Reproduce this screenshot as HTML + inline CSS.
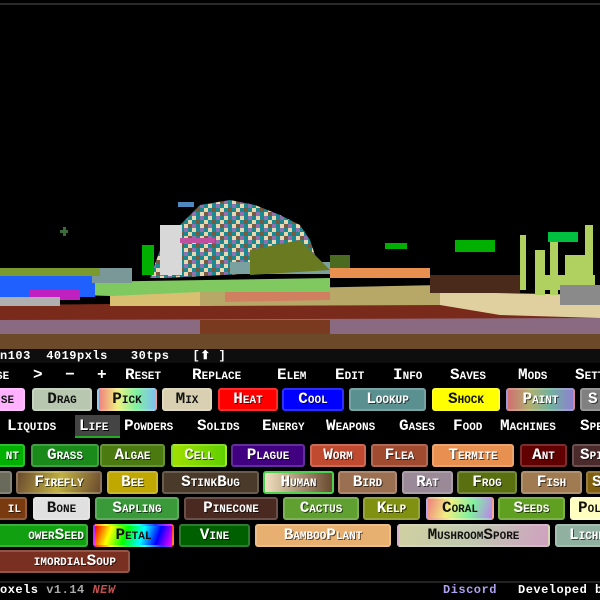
<!DOCTYPE html>
<html><head><meta charset="utf-8"><style>
*{margin:0;padding:0;box-sizing:border-box}
body{width:600px;height:600px;background:#000;overflow:hidden;position:relative;font-family:"Liberation Mono",monospace;font-weight:bold;color:#fff}
.a{position:absolute;white-space:nowrap}
.t{font-size:16px;font-variant:small-caps;text-shadow:1px 1px 0 #000;height:15px;line-height:15px}
.b{position:absolute;height:23px;border-radius:3px;border:2px solid rgba(255,255,255,.18);font-size:16px;font-variant:small-caps;line-height:19px;text-align:center;overflow:hidden;text-shadow:1px 1px 0 rgba(0,0,0,.6);white-space:nowrap}
.d{color:#111;text-shadow:none}
</style></head><body>
<div class="a" style="left:0;top:3px;width:600px;height:2px;background:#2a2a2a"></div>
<svg class="a" style="left:0;top:0" width="600" height="350">
<defs>
<pattern id="m" width="16" height="12" patternUnits="userSpaceOnUse">
<rect width="16" height="12" fill="#1a8a90"/>
<rect x="0" y="0" width="4" height="4" fill="#e8d8b0"/><rect x="8" y="0" width="4" height="4" fill="#9070b0"/>
<rect x="4" y="4" width="4" height="4" fill="#7a5a40"/><rect x="12" y="4" width="4" height="4" fill="#e8d8b0"/>
<rect x="0" y="8" width="4" height="4" fill="#9070b0"/><rect x="8" y="8" width="4" height="4" fill="#e8d8b0"/><rect x="12" y="8" width="4" height="4" fill="#7a5a40"/>
</pattern>
</defs>
<rect x="0" y="333" width="600" height="17" fill="#6b4a2a"/>
<rect x="0" y="318" width="600" height="16" fill="#8a6a80"/>
<rect x="200" y="320" width="130" height="14" fill="#7a3a20"/>
<polygon points="0,305 600,300 600,318 0,320" fill="#7a2a1a"/>
<polygon points="110,293 200,290 210,306 110,306" fill="#d8c070"/>
<polygon points="200,290 440,285 440,305 200,306" fill="#b8a868"/>
<polygon points="225,292 330,292 330,300 225,302" fill="#d08060"/>
<polygon points="440,292 600,295 600,318 500,315 440,305" fill="#e0d0a0"/>
<polygon points="80,282 330,278 330,292 200,292 110,296 80,295" fill="#80c860"/>
<rect x="0" y="275" width="95" height="22" fill="#2060ff"/>
<rect x="30" y="290" width="50" height="10" fill="#c020c0"/>
<rect x="0" y="297" width="60" height="9" fill="#b0b0b0"/>
<rect x="92" y="268" width="40" height="15" fill="#7a9898"/>
<rect x="0" y="268" width="100" height="8" fill="#7a9a30"/>
<polygon points="150,278 160,250 180,225 200,205 230,200 255,205 280,215 300,225 310,240 320,270 165,278" fill="url(#m)"/>
<rect x="230" y="262" width="110" height="12" fill="#7aa0a0"/>
<polygon points="250,250 300,240 330,270 250,275" fill="#6a7a20"/>
<rect x="142" y="245" width="12" height="30" fill="#00b000"/>
<rect x="160" y="225" width="22" height="50" fill="#d8d8d8"/>
<rect x="178" y="202" width="16" height="5" fill="#5088c0"/>
<rect x="180" y="238" width="35" height="5" fill="#c050a0"/>
<rect x="60" y="230" width="8" height="3" fill="#3a6a3a"/><rect x="63" y="227" width="3" height="9" fill="#3a6a3a"/>
<rect x="385" y="243" width="22" height="6" fill="#00b000"/><rect x="455" y="240" width="40" height="12" fill="#00b000"/>
<rect x="330" y="255" width="20" height="20" fill="#4a6a20"/>
<rect x="330" y="268" width="100" height="10" fill="#e89050"/>
<rect x="430" y="275" width="90" height="18" fill="#4a2a1a"/>
<g fill="#b0d060">
<rect x="520" y="235" width="6" height="55"/><rect x="535" y="250" width="10" height="45"/><rect x="550" y="240" width="8" height="55"/><rect x="565" y="255" width="25" height="35"/><rect x="585" y="225" width="8" height="65"/><rect x="540" y="275" width="55" height="15"/>
</g>
<rect x="548" y="232" width="30" height="10" fill="#00c040"/>
<rect x="560" y="285" width="40" height="20" fill="#8a8a8a"/>
</svg>
<div class="a" style="left:0;top:349px;width:600px;height:14px;background:#0e0e0e"></div>
<div class="a" style="left:0;top:350px;font-size:12px;line-height:13px;letter-spacing:.5px">n103 &nbsp;4019pxls &nbsp;&nbsp;30tps &nbsp;&nbsp;[⬆ ]</div>
<div class="a t" style="left:-4px;top:368px">se</div><div class="a t" style="left:33px;top:368px">&gt;</div><div class="a t" style="left:65px;top:368px">−</div><div class="a t" style="left:97px;top:368px">+</div>
<div class="a t" style="left:125px;top:368px">Reset</div><div class="a t" style="left:192px;top:368px">Replace</div><div class="a t" style="left:277px;top:368px">Elem</div><div class="a t" style="left:335px;top:368px">Edit</div><div class="a t" style="left:393px;top:368px">Info</div><div class="a t" style="left:450px;top:368px">Saves</div><div class="a t" style="left:518px;top:368px">Mods</div><div class="a t" style="left:575px;top:368px">Settings</div>

<div class="b d" style="left:-10px;top:388px;width:35px;background:#ffb0ff">se</div>
<div class="b d" style="left:32px;top:388px;width:60px;background:#b8c8b0">Drag</div>
<div class="b d" style="left:97px;top:388px;width:60px;background:linear-gradient(90deg,#f08080,#f0f080,#80f0a0,#80c0f0)">Pick</div>
<div class="b d" style="left:162px;top:388px;width:50px;background:#d8d0b0">Mix</div>
<div class="b" style="left:218px;top:388px;width:60px;background:#ff0000">Heat</div>
<div class="b" style="left:282px;top:388px;width:62px;background:#0000ff">Cool</div>
<div class="b" style="left:349px;top:388px;width:77px;background:#5a9090">Lookup</div>
<div class="b d" style="left:432px;top:388px;width:68px;background:#ffff00">Shock</div>
<div class="b" style="left:506px;top:388px;width:69px;background:linear-gradient(90deg,#d07070,#b0b070,#70b0a0,#9080d0)">Paint</div>
<div class="b" style="left:580px;top:388px;width:40px;background:#808080;text-align:left;padding-left:6px">S</div>

<div class="a" style="left:75px;top:415px;width:45px;height:23px;background:#444;border-bottom:2px solid #2a2"></div>
<div class="a t" style="left:7px;top:419px">Liquids</div><div class="a t" style="left:79px;top:419px">Life</div><div class="a t" style="left:124px;top:419px">Powders</div><div class="a t" style="left:197px;top:419px">Solids</div><div class="a t" style="left:262px;top:419px">Energy</div><div class="a t" style="left:326px;top:419px">Weapons</div><div class="a t" style="left:399px;top:419px">Gases</div><div class="a t" style="left:453px;top:419px">Food</div><div class="a t" style="left:500px;top:419px">Machines</div><div class="a t" style="left:580px;top:419px">Special</div>

<div class="b" style="left:-20px;top:444px;width:45px;background:#00b000;text-align:right;padding-right:4px">nt</div>
<div class="b" style="left:31px;top:444px;width:68px;background:#1a8a1a">Grass</div>
<div class="b" style="left:100px;top:444px;width:65px;background:#4a7a10">Algae</div>
<div class="b" style="left:171px;top:444px;width:56px;background:linear-gradient(90deg,#a0e000,#60d000)">Cell</div>
<div class="b" style="left:231px;top:444px;width:74px;background:#400080">Plague</div>
<div class="b" style="left:310px;top:444px;width:56px;background:#c04a30">Worm</div>
<div class="b" style="left:371px;top:444px;width:57px;background:#a04a30">Flea</div>
<div class="b" style="left:432px;top:444px;width:82px;background:#e89050">Termite</div>
<div class="b" style="left:520px;top:444px;width:47px;background:#600000">Ant</div>
<div class="b" style="left:572px;top:444px;width:60px;background:#4a2a2a;text-align:left;padding-left:6px">Spider</div>

<div class="b" style="left:-20px;top:471px;width:32px;background:#6a6a5a"></div>
<div class="b" style="left:16px;top:471px;width:86px;background:linear-gradient(110deg,#6a4a30,#c0b040 50%,#6a4a30)">Firefly</div>
<div class="b" style="left:107px;top:471px;width:51px;background:#c0a800">Bee</div>
<div class="b" style="left:162px;top:471px;width:97px;background:#4a3a2a">StinkBug</div>
<div class="b" style="left:263px;top:471px;width:71px;background:linear-gradient(90deg,#f0e0c0,#6a4a30);border-color:#50d050">Human</div>
<div class="b" style="left:338px;top:471px;width:59px;background:#9a7050">Bird</div>
<div class="b" style="left:402px;top:471px;width:51px;background:#9a8a98">Rat</div>
<div class="b" style="left:457px;top:471px;width:60px;background:#5a7010">Frog</div>
<div class="b" style="left:521px;top:471px;width:61px;background:#a07a50">Fish</div>
<div class="b" style="left:586px;top:471px;width:40px;background:#806010;text-align:left;padding-left:4px">S</div>

<div class="b" style="left:-20px;top:497px;width:47px;background:#7a3a10;text-align:right;padding-right:4px">il</div>
<div class="b d" style="left:33px;top:497px;width:57px;background:#e0e0e0">Bone</div>
<div class="b" style="left:95px;top:497px;width:84px;background:#3a9a3a">Sapling</div>
<div class="b" style="left:184px;top:497px;width:94px;background:#4a2a20">Pinecone</div>
<div class="b" style="left:283px;top:497px;width:76px;background:#60a030">Cactus</div>
<div class="b" style="left:363px;top:497px;width:57px;background:#809010">Kelp</div>
<div class="b d" style="left:426px;top:497px;width:68px;background:linear-gradient(110deg,#f08080,#f0f080,#80f0a0,#c080f0)">Coral</div>
<div class="b" style="left:498px;top:497px;width:67px;background:#60a020">Seeds</div>
<div class="b d" style="left:570px;top:497px;width:60px;background:#ffffc0;text-align:left;padding-left:6px">Pollen</div>

<div class="b" style="left:-20px;top:524px;width:108px;background:#10a010;text-align:right;padding-right:2px">owerSeed</div>
<div class="b d" style="left:93px;top:524px;width:81px;background:linear-gradient(110deg,#ff0000,#ffff00,#00ff00,#00ffff,#0000ff,#ff00ff)">Petal</div>
<div class="b" style="left:179px;top:524px;width:71px;background:#006000">Vine</div>
<div class="b" style="left:255px;top:524px;width:136px;background:#e8b070">BambooPlant</div>
<div class="b d" style="left:397px;top:524px;width:153px;background:linear-gradient(110deg,#d0d0a0,#c0c8b0,#d0a0c0)">MushroomSpore</div>
<div class="b" style="left:555px;top:524px;width:80px;background:#90b0a0;text-align:left;padding-left:12px">Lichen</div>

<div class="b" style="left:-20px;top:550px;width:150px;background:#7a3020;text-align:right;padding-right:12px">imordialSoup</div>

<div class="a" style="left:0;top:581px;width:600px;height:2px;background:#222"></div>
<div class="a" style="left:0;top:584px;font-size:12px;line-height:13px;letter-spacing:.5px">oxels <span style="color:#aaa">v1.14</span> <i style="color:#c05050">NEW</i></div>
<div class="a" style="left:443px;top:584px;font-size:12px;line-height:13px;color:#b0a0f0;letter-spacing:.5px">Discord</div>
<div class="a" style="left:518px;top:584px;font-size:12px;line-height:13px;letter-spacing:.5px">Developed by</div>
</body></html>
